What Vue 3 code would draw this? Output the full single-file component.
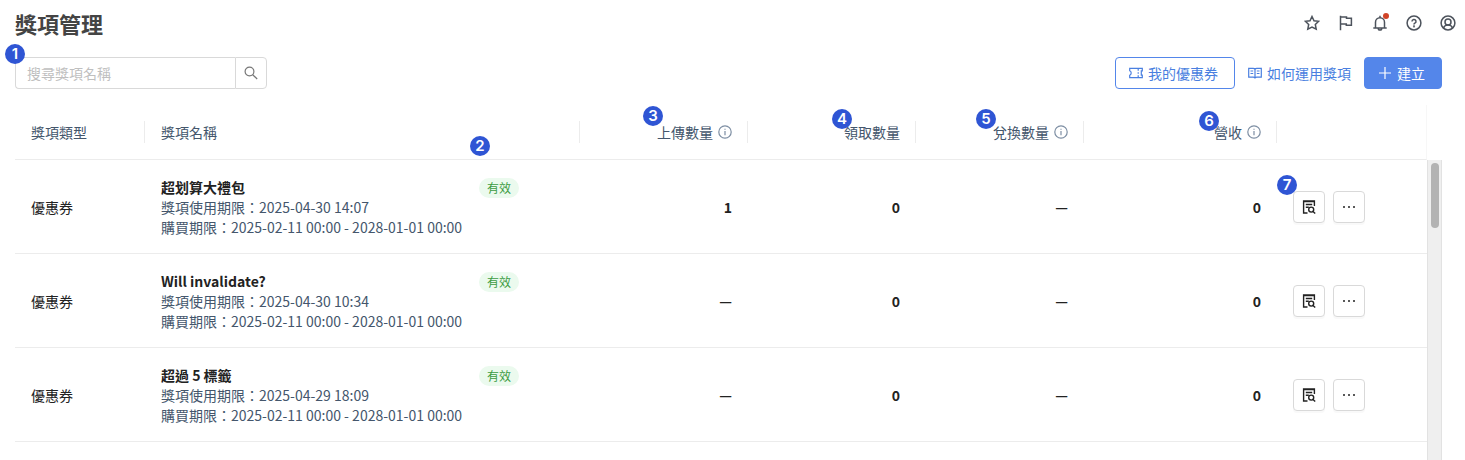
<script setup>
import { ref } from 'vue'

const keyword = ref('')

const rows = [
  { type: '優惠券', name: '超划算大禮包', use: '2025-04-30 14:07', buy: '2025-02-11 00:00 - 2028-01-01 00:00', status: '有效', uploaded: '1', claimed: '0', redeemed: '—', revenue: '0', marker: '7' },
  { type: '優惠券', name: 'Will invalidate?', use: '2025-04-30 10:34', buy: '2025-02-11 00:00 - 2028-01-01 00:00', status: '有效', uploaded: '—', claimed: '0', redeemed: '—', revenue: '0' },
  { type: '優惠券', name: '超過 5 標籤', use: '2025-04-29 18:09', buy: '2025-02-11 00:00 - 2028-01-01 00:00', status: '有效', uploaded: '—', claimed: '0', redeemed: '—', revenue: '0' },
]

const metrics = [
  { label: '上傳數量', info: true, marker: '3' },
  { label: '領取數量', info: false, marker: '4' },
  { label: '兌換數量', info: true, marker: '5' },
  { label: '營收', info: true, marker: '6' },
]
</script>

<template>
  <div class="page">
    <header class="topbar">
      <h1>獎項管理</h1>
      <nav class="tools" aria-label="工具">
        <button type="button" aria-label="收藏">
          <svg viewBox="0 0 16 16"><path d="M8 1.500l2 4.200 4.700.6-3.400 3.200.9 4.700L8 12l-4.200 2.200.9-4.700L1.300 6.300 6 5.700z" /></svg>
        </button>
        <button type="button" aria-label="標記">
          <svg viewBox="0 0 16 16"><path d="M2.500 15.300V.8M2.500 2h6v1.300h4.900v6.900H8.300V8.900H2.500" /></svg>
        </button>
        <button type="button" class="bell" aria-label="通知">
          <svg viewBox="0 0 16 16"><path d="M1.300 13h13.400M3.500 13V7.200a4.500 4.500 0 0 1 9 0V13M8 2.700V.8M6.200 13.200a1.800 1.800 0 0 0 3.600 0" /></svg>
          <span class="dot"></span>
        </button>
        <button type="button" aria-label="說明">
          <svg viewBox="0 0 16 16"><circle cx="8" cy="8" r="6.900" /><path d="M6 6.500a2 2 0 1 1 2.900 1.700c-.7.4-.9.6-.9 1.300" /><circle cx="8" cy="11.400" r=".35" /></svg>
        </button>
        <button type="button" aria-label="帳號">
          <svg viewBox="0 0 16 16"><circle cx="8" cy="8" r="6.900" /><circle cx="8" cy="7" r="3" /><path d="M3.500 13c.6-2 2.300-3 4.500-3s3.900 1 4.500 3" /></svg>
        </button>
      </nav>
    </header>

    <div class="toolbar">
      <form class="search" role="search" @submit.prevent>
        <span class="marker m1">1</span>
        <input v-model="keyword" type="text" placeholder="搜尋獎項名稱" aria-label="搜尋獎項名稱" />
        <button type="submit" aria-label="搜尋">
          <svg viewBox="0 0 14 14"><circle cx="5.500" cy="5.500" r="4.400" /><path d="M8.700 8.700l4.500 4.300" /></svg>
        </button>
      </form>
      <div class="actions">
        <button type="button" class="btn outline">
          <svg viewBox="0 0 14 14"><path d="M.7 2.300h12.600v2.500h-1v4.400h1v2.500H.7V9.200c2-.6 2-3.800 0-4.400zM9.200 2.500v2.200M9.200 9.300v2.200M9.200 6.200v1.600" /></svg>
          我的優惠券
        </button>
        <a href="#" class="link">
          <svg viewBox="0 0 14 14"><path d="M7 3.200C6.600 2.600 6 2.300 5.200 2.300H.7v8.900h4.500c.8 0 1.400.2 1.800.8.4-.6 1-.8 1.800-.8h4.500V2.300H8.800c-.8 0-1.400.3-1.800.9zM7 3.200V12M2.500 5h2.700M2.500 7.500h2.700M8.800 5h2.700M8.800 7.500h2.700" /></svg>
          如何運用獎項
        </a>
        <button type="button" class="btn primary">
          <svg viewBox="0 0 14 14"><path d="M7 1v12M1 7h12" /></svg>
          建立
        </button>
      </div>
    </div>

    <div class="list">
      <table>
        <colgroup>
          <col class="c-type" /><col /><col class="c-status" /><col class="c-num" /><col class="c-num" /><col class="c-num" /><col class="c-rev" /><col class="c-act" />
        </colgroup>
        <thead>
          <tr>
            <th scope="col">獎項類型</th>
            <th scope="col" colspan="2">獎項名稱<span class="marker m2">2</span></th>
            <th v-for="m in metrics" :key="m.label" scope="col" class="num">
              <span class="head">
                <span class="marker" :class="'m' + m.marker">{{ m.marker }}</span>
                {{ m.label }}
                <svg v-if="m.info" viewBox="0 0 14 14" aria-hidden="true"><circle cx="7" cy="7" r="6.200" /><path d="M7 6v4.300M7 3.700v1.100" /></svg>
              </span>
            </th>
            <th scope="col" class="last" aria-label="操作"></th>
          </tr>
        </thead>
        <tbody>
          <tr v-for="r in rows" :key="r.name">
            <td>{{ r.type }}</td>
            <td class="name">
              <strong>{{ r.name }}</strong>
              <div>獎項使用期限：{{ r.use }}</div>
              <div>購買期限：{{ r.buy }}</div>
            </td>
            <td class="status"><span class="pill">{{ r.status }}</span></td>
            <td class="num">{{ r.uploaded }}</td>
            <td class="num">{{ r.claimed }}</td>
            <td class="num">{{ r.redeemed }}</td>
            <td class="num">{{ r.revenue }}</td>
            <td>
              <div class="ops">
                <span v-if="r.marker" class="marker m7">{{ r.marker }}</span>
                <button type="button" aria-label="查看明細">
                  <svg viewBox="0 0 14 14"><path d="M5.500 13H1.600V1h10.800v5M1.600 1.600h10.800M3.800 4.500h6.400M3.800 7.200h3" /><circle cx="9.200" cy="9.600" r="2.500" /><path d="M11 11.400l2.200 2" /></svg>
                </button>
                <button type="button" aria-label="更多">
                  <svg class="dots" viewBox="0 0 14 14"><circle cx="2" cy="7" r="1" /><circle cx="7" cy="7" r="1" /><circle cx="12" cy="7" r="1" /></svg>
                </button>
              </div>
            </td>
          </tr>
        </tbody>
      </table>
      <div class="track" aria-hidden="true"><div class="thumb"></div></div>
    </div>
  </div>
</template>

<style>
body {
  background: #fff;
}
</style>

<style scoped>
.page {
  height: 100vh;
  box-sizing: border-box;
  display: flex;
  flex-direction: column;
  overflow: hidden;
  font-family: "Noto Sans CJK TC", "Noto Sans", sans-serif;
  font-size: 14px;
  line-height: 20px;
  color: #222;
}
button,
input {
  font: inherit;
  box-sizing: border-box;
  margin: 0;
}
button {
  cursor: pointer;
}
svg {
  width: 14px;
  height: 14px;
  flex: none;
  fill: none;
  stroke: currentColor;
  stroke-width: 1.2;
}
.topbar {
  display: flex;
  align-items: center;
  justify-content: space-between;
  height: 46px;
  padding: 0 9px 0 15px;
}
h1 {
  margin: 0;
  font-size: 22px;
  line-height: 32px;
  font-weight: 700;
  color: #444;
}
.tools {
  display: flex;
  gap: 18px;
}
.tools button {
  position: relative;
  display: flex;
  padding: 0;
  border: 0;
  background: none;
  color: #4d535c;
}
.tools svg {
  width: 16px;
  height: 16px;
  stroke-width: 1.5;
}
.dot {
  position: absolute;
  top: -2px;
  right: -1px;
  width: 6px;
  height: 6px;
  border-radius: 50%;
  background: #d04328;
}
.toolbar {
  display: flex;
  justify-content: space-between;
  padding: 11px 23px 16px 15px;
}
.search {
  position: relative;
  display: flex;
  width: 252px;
}
.search input {
  flex: 1;
  min-width: 0;
  height: 32px;
  padding: 0 11px;
  border: 1px solid #d9d9d9;
  border-right: 0;
  border-radius: 4px 0 0 4px;
  outline: none;
  color: #222;
}
.search input::placeholder {
  color: #bfbfbf;
}
.search button {
  display: flex;
  align-items: center;
  justify-content: center;
  width: 32px;
  height: 32px;
  padding: 0;
  border: 1px solid #d9d9d9;
  border-radius: 0 4px 4px 0;
  background: #fff;
  color: #777;
}
.actions {
  display: flex;
  align-items: center;
  gap: 13px;
}
.btn,
.link {
  display: flex;
  align-items: center;
  gap: 5px;
  color: #4a7fe0;
  text-decoration: none;
  white-space: nowrap;
}
.btn {
  height: 32px;
  padding: 0 16px 0 13px;
  border: 1px solid #5486ea;
  border-radius: 4px;
  background: #fff;
}
.primary {
  background: #5486ea;
  color: #fff;
}
.list {
  flex: 1;
  min-height: 0;
  display: flex;
  margin: 0 23px 0 15px;
}
table {
  flex: 1;
  align-self: flex-start;
  table-layout: fixed;
  width: 100%;
  border-collapse: separate;
  border-spacing: 0;
}
.c-type {
  width: 130px;
}
.c-status {
  width: 117px;
}
.c-num {
  width: 168px;
}
.c-rev {
  width: 193px;
}
.c-act {
  width: 150px;
}
th,
td {
  box-sizing: border-box;
  padding: 0 16px;
  border-bottom: 1px solid #ececec;
  text-align: left;
  white-space: nowrap;
}
th {
  position: relative;
  height: 55px;
  font-weight: 400;
  color: #44566c;
}
th::after {
  content: "";
  position: absolute;
  top: 16px;
  right: 0;
  width: 1px;
  height: 22px;
  background: #ececec;
}
th.last {
  border-right: 1px solid #f7f7f7;
}
th.last::after {
  display: none;
}
td {
  height: 94px;
}
.num {
  text-align: right;
}
td.num {
  font-weight: 700;
}
.head {
  position: relative;
  display: inline-flex;
  align-items: center;
  gap: 5px;
}
.head svg {
  color: #7d8ea3;
}
.name {
  padding-right: 0;
  color: #44566c;
}
.name strong {
  display: block;
  font-weight: 700;
  color: #222;
}
.status {
  vertical-align: top;
  padding-top: 18px;
}
.pill {
  display: block;
  width: max-content;
  padding: 0 8px;
  border-radius: 10px;
  background: #ebfaee;
  color: #3c9c42;
  font-size: 12px;
}
.ops {
  position: relative;
  display: flex;
  gap: 8px;
}
.ops button {
  display: flex;
  align-items: center;
  justify-content: center;
  width: 32px;
  height: 32px;
  padding: 0;
  border: 1px solid #d9d9d9;
  border-radius: 4px;
  background: #fff;
  box-shadow: 0 2px 0 #f9f9f9;
  color: #222;
}
.ops svg {
  stroke-width: 1.4;
}
.ops .dots {
  fill: currentColor;
  stroke: none;
}
.track {
  box-sizing: border-box;
  flex: none;
  width: 15px;
  margin-top: 55px;
  padding: 3px 2px 0 3px;
  border: solid #e2e2e2;
  border-width: 0 1px;
  background: #efefef;
}
.thumb {
  height: 65px;
  border-radius: 4px;
  background: #b3b3b3;
}
.marker {
  position: absolute;
  z-index: 1;
  width: 20px;
  height: 20px;
  border-radius: 50%;
  background: #2f55d4;
  color: #fff;
  font: 600 15px/20px Inter, sans-serif;
  text-align: center;
}
.m1 {
  top: -13px;
  left: -10px;
}
.m2 {
  top: 31px;
  right: 90px;
}
.m3 {
  top: -16px;
  left: -14px;
}
.m4 {
  top: -13px;
  left: -12px;
}
.m5 {
  top: -13px;
  left: -17px;
}
.m6 {
  top: -11px;
  left: -15px;
}
.m7 {
  top: -16px;
  left: -16px;
}
</style>
